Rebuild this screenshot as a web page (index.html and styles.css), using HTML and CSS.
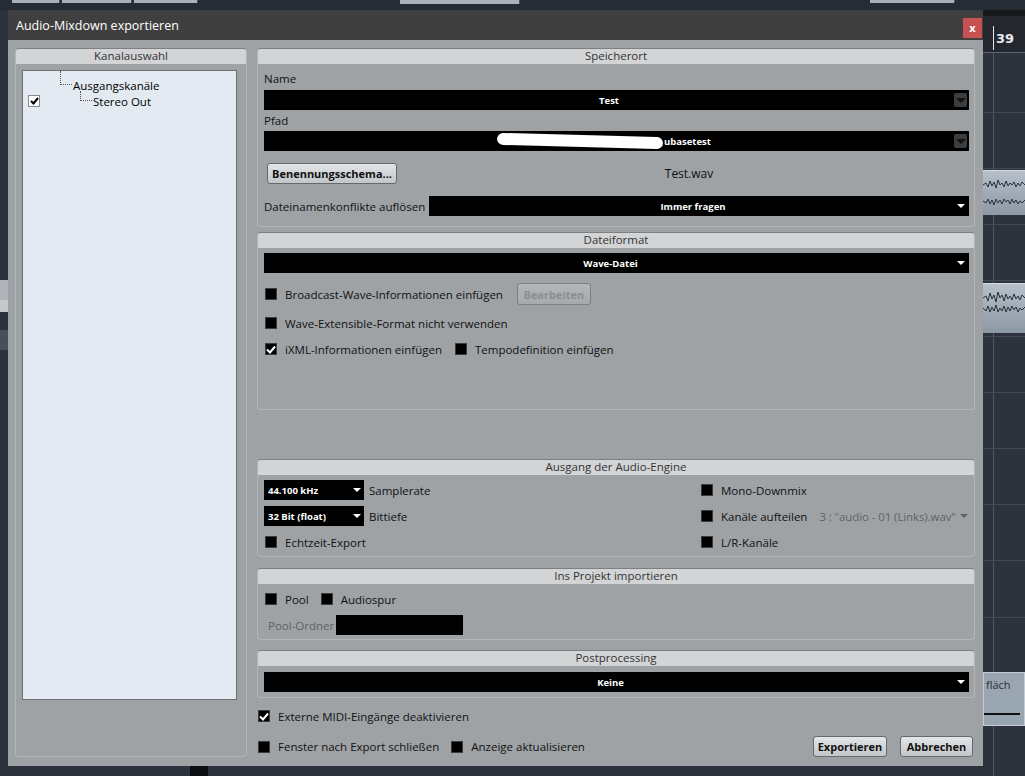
FILE: index.html
```html
<!DOCTYPE html>
<html lang="de">
<head>
<meta charset="utf-8">
<title>Audio-Mixdown exportieren</title>
<link rel="stylesheet" href="styles.css">
</head>
<body>
<div class="desk">
  <div class="topbar">
    <span class="tb tb1"></span><span class="tb tb2"></span><span class="tb tb3"></span><span class="tb tb4"></span><span class="tb tb5"></span>
  </div>
  <div class="ruler"><span class="rmark"></span><span class="rnum">39</span></div>
  <div class="vgrid"></div>
  <div class="hline" style="top:112px"></div>
  <div class="hline" style="top:168px"></div>
  <div class="hline" style="top:224px"></div>
  <div class="hline" style="top:280px"></div>
  <div class="hline" style="top:336px"></div>
  <div class="hline" style="top:392px"></div>
  <div class="hline" style="top:448px"></div>
  <div class="hline" style="top:504px"></div>
  <div class="hline" style="top:560px"></div>
  <div class="hline" style="top:617px"></div>
  <div class="clip clip1"><svg width="42" height="44" viewBox="0 0 42 44"><path d="M0 14 L3 12 L5 16 L7 10 L9 15 L11 11 L13 17 L15 9 L17 14 L19 12 L21 16 L23 10 L25 15 L27 12 L29 14 L31 11 L33 16 L35 12 L37 15 L39 11 L42 14" fill="none" stroke="#2a2f36" stroke-width="1"/><path d="M0 30 L3 32 L5 28 L7 33 L9 29 L11 34 L13 28 L15 32 L17 29 L19 33 L21 28 L23 31 L25 29 L27 33 L29 28 L31 32 L33 29 L35 33 L37 30 L39 32 L42 29" fill="none" stroke="#2a2f36" stroke-width="1"/></svg></div>
  <div class="clip clip2"><svg width="42" height="50" viewBox="0 0 42 50"><path d="M0 14 L3 12 L5 17 L7 9 L9 15 L11 11 L13 18 L15 8 L17 14 L19 11 L21 17 L23 10 L25 15 L27 12 L29 16 L31 10 L33 15 L35 12 L37 16 L39 11 L42 14" fill="none" stroke="#2a2f36" stroke-width="1"/><path d="M0 24 L3 27 L5 22 L7 28 L9 23 L11 27 L13 21 L15 28 L17 24 L19 27 L21 22 L23 28 L25 23 L27 27 L29 22 L31 26 L33 23 L35 28 L37 24 L39 26 L42 23" fill="none" stroke="#2a2f36" stroke-width="1"/></svg></div>
  <div class="clip clip3"><span class="cliptext">fläch</span><span class="clipline"></span></div>
  <div class="leftcell lc1"></div>
  <div class="leftcell lc2"></div>
  <div class="leftcell lc3"></div>
  <div class="bottombar"></div>
</div>

<div class="dialog">
  <div class="titlebar">Audio-Mixdown exportieren<span class="close">x</span></div>
  <div class="dbody">
    <div class="leftpanel">
      <div class="phead">Kanalauswahl</div>
      <div class="tree">
        <div class="trow t1"><span class="dots d1"></span>Ausgangskanäle</div>
        <div class="trow t2"><span class="tcheck"><svg width="9" height="8" viewBox="0 0 9 8"><path d="M1 4 L3.5 6.5 L8 1" fill="none" stroke="#000" stroke-width="2"/></svg></span><span class="dots d2"></span>Stereo Out</div>
      </div>
    </div>

    <div class="rightcol">
      <div class="section s-speicher">
        <div class="shead">Speicherort</div>
        <div class="sbody">
          <div class="label l-name">Name</div>
          <div class="field f-name"><span class="ftext">Test</span><span class="abtn"><span class="tri dark"></span></span></div>
          <div class="label l-pfad">Pfad</div>
          <div class="field f-pfad"><span class="ftext"><span class="blob"></span>ubasetest</span><span class="abtn"><span class="tri dark"></span></span></div>
          <div class="btnrow">
            <span class="btn b-schema">Benennungsschema...</span>
            <span class="fname">Test.wav</span>
          </div>
          <div class="konflikt">
            <span class="klabel">Dateinamenkonflikte auflösen</span>
            <div class="drop d-konf"><span class="ftext">Immer fragen</span><span class="tri"></span></div>
          </div>
        </div>
      </div>

      <div class="section s-format">
        <div class="shead">Dateiformat</div>
        <div class="sbody">
          <div class="drop d-wave"><span class="ftext">Wave-Datei</span><span class="tri"></span></div>
          <div class="crow r-bwf"><span class="cb"></span><span>Broadcast-Wave-Informationen einfügen</span><span class="btn disabled b-edit">Bearbeiten</span></div>
          <div class="crow r-ext"><span class="cb"></span><span>Wave-Extensible-Format nicht verwenden</span></div>
          <div class="crow r-ixml"><span class="cb on"><svg width="10" height="9" viewBox="0 0 10 9"><path d="M1 4.5 L4 7.5 L9 1.5" fill="none" stroke="#fff" stroke-width="2"/></svg></span><span>iXML-Informationen einfügen</span><span class="cb cb-gap"></span><span>Tempodefinition einfügen</span></div>
        </div>
      </div>

      <div class="section s-engine">
        <div class="shead">Ausgang der Audio-Engine</div>
        <div class="sbody egrid">
          <div class="crow"><span class="sel"><span class="seltext">44.100 kHz</span><span class="tri"></span></span><span>Samplerate</span></div>
          <div class="crow"><span class="cb"></span><span>Mono-Downmix</span></div>
          <div class="crow"><span class="sel"><span class="seltext">32 Bit (float)</span><span class="tri"></span></span><span>Bittiefe</span></div>
          <div class="crow"><span class="cb"></span><span>Kanäle aufteilen</span><span class="grey split">3 : "audio - 01 (Links).wav"</span><span class="tri grey-tri"></span></div>
          <div class="crow"><span class="cb"></span><span>Echtzeit-Export</span></div>
          <div class="crow"><span class="cb"></span><span>L/R-Kanäle</span></div>
        </div>
      </div>

      <div class="section s-import">
        <div class="shead">Ins Projekt importieren</div>
        <div class="sbody">
          <div class="crow r-pool"><span class="cb"></span><span>Pool</span><span class="cb cb-gap2"></span><span>Audiospur</span></div>
          <div class="crow r-order"><span class="grey">Pool-Ordner</span><span class="pfield"></span></div>
        </div>
      </div>

      <div class="section s-post">
        <div class="shead">Postprocessing</div>
        <div class="sbody">
          <div class="drop d-post"><span class="ftext">Keine</span><span class="tri"></span></div>
        </div>
      </div>

      <div class="crow r-midi"><span class="cb on"><svg width="10" height="9" viewBox="0 0 10 9"><path d="M1 4.5 L4 7.5 L9 1.5" fill="none" stroke="#fff" stroke-width="2"/></svg></span><span>Externe MIDI-Eingänge deaktivieren</span></div>
      <div class="crow r-foot">
        <span class="cb"></span><span>Fenster nach Export schließen</span>
        <span class="cb cb-gap3"></span><span>Anzeige aktualisieren</span>
        <span class="spacer"></span>
        <span class="btn b-exp">Exportieren</span>
        <span class="btn b-abb">Abbrechen</span>
      </div>
    </div>
  </div>
</div>
</body>
</html>
```

FILE: styles.css
```css
* { box-sizing: border-box; }
html, body { margin: 0; padding: 0; }
body {
  width: 1025px;
  height: 776px;
  overflow: hidden;
  position: relative;
  background: #2c333c;
  font-family: "Open Sans", "Noto Sans", "DejaVu Sans", sans-serif;
  font-size: 11.5px;
  color: #111;
}

/* ---------- background DAW ---------- */
.desk { position: absolute; inset: 0; }
.topbar { position: absolute; left: 0; top: 0; width: 1025px; height: 10px; background: #262c34; }
.tb { position: absolute; top: 0; height: 3px; background: #a9b2bc; border-right: 1px solid #4b535d; }
.tb1 { left: 12px; width: 48px; }
.tb2 { left: 62px; width: 70px; }
.tb3 { left: 134px; width: 64px; }
.tb4 { left: 400px; width: 120px; height: 4px; }
.tb5 { left: 870px; width: 85px; }
.ruler { position: absolute; left: 983px; top: 10px; width: 42px; height: 43px; background: #24282e; border-top: 6px solid #17191c; border-bottom: 1px solid #5a636e; }
.rmark { position: absolute; left: 10px; top: 10px; width: 1px; height: 24px; background: #e6e6e6; }
.rnum { position: absolute; left: 13px; top: 15px; color: #e8ecf2; font-weight: bold; font-size: 13px; font-family: "DejaVu Sans", sans-serif; }
.vgrid { position: absolute; left: 993px; top: 53px; width: 1px; height: 723px; background: #4f5863; }
.hline { position: absolute; left: 983px; width: 42px; height: 1px; background: #414953; }
.clip { position: absolute; left: 983px; width: 42px; background: linear-gradient(#b6bfca, #8d98a5); border-top: 1px solid #d5dbe2; }
.clip1 { top: 170px; height: 45px; }
.clip2 { top: 283px; height: 50px; }
.clip3 { top: 672px; height: 54px; background: #9aa5b2; border: 1px solid #c4ccd6; }
.cliptext { position: absolute; left: 2px; top: 4px; font-size: 11px; color: #2a2f36; }
.clipline { position: absolute; left: 0; right: 4px; top: 40px; height: 2px; background: #111; }
.leftcell { position: absolute; left: 0; width: 8px; }
.lc1 { top: 280px; height: 20px; background: #aeb3b9; }
.lc2 { top: 300px; height: 12px; background: #c5c9cd; }
.lc3 { top: 330px; height: 20px; background: #484f58; }
.bottombar { position: absolute; left: 190px; top: 766px; width: 18px; height: 10px; background: #0c0d0f; }

/* ---------- dialog ---------- */
.dialog {
  position: absolute;
  left: 8px;
  top: 10px;
  width: 975px;
  height: 756px;
  background: #9ea2a5;
  display: flex;
  flex-direction: column;
}
.titlebar {
  height: 30px;
  flex: none;
  background: #3f3f3f;
  color: #fff;
  font-size: 12.5px;
  display: flex;
  align-items: center;
  padding-left: 8px;
  position: relative;
}
.close {
  position: absolute;
  right: 1px;
  top: 8px;
  width: 19px;
  height: 20px;
  background: #c75050;
  color: #fff;
  font-size: 11px;
  font-weight: bold;
  display: flex;
  align-items: center;
  justify-content: center;
  line-height: 1;
  padding-bottom: 2px;
}
.dbody {
  flex: 1;
  display: flex;
  gap: 10px;
  padding: 8px 8px 9px 7px;
}

/* left panel */
.leftpanel {
  width: 232px;
  flex: none;
  border: 1px solid #b3b6b9;
  border-top-color: #7d8083;
  border-radius: 4px;
  display: flex;
  flex-direction: column;
}
.phead, .shead {
  height: 15px;
  flex: none;
  background: #d2d4d6;
  color: #333;
  text-align: center;
  line-height: 14px;
  font-size: 11.5px;
  border-radius: 3px 3px 0 0;
}
.tree {
  margin: 6px 9px 0 6px;
  height: 630px;
  background: #e4eaf1;
  border: 1px solid #6e6f71;
  position: relative;
}
.trow { position: absolute; display: flex; align-items: center; height: 14px; font-size: 11.5px; color: #000; line-height: 13px; }
.t1 { left: 50px; top: 7px; }
.t2 { left: 5px; top: 23px; width: 200px; }
.dots { display: inline-block; border-left: 1px dotted #555; border-bottom: 1px dotted #555; }
.t1 .d1 { position: absolute; left: -13px; top: -7px; width: 12px; height: 14px; margin: 0; }
.tcheck {
  width: 12px; height: 12px;
  background: #fff;
  border: 1px solid #8a8a8a;
  display: flex; align-items: center; justify-content: center;
  margin-right: 40px;
}
.d2 { width: 12px; height: 10px; margin-top: -10px; margin-right: 1px; }

/* right column */
.rightcol {
  flex: 1;
  display: flex;
  flex-direction: column;
  line-height: 15px;
}
.section {
  border: 1px solid #b3b6b9;
  border-top-color: #7d8083;
  border-radius: 4px;
  display: flex;
  flex-direction: column;
  flex: none;
}
.sbody { padding: 0 5px 0 6px; display: flex; flex-direction: column; }
.s-speicher { height: 179px; }
.s-format { height: 178px; margin-top: 5px; }
.s-engine { height: 98px; margin-top: 49px; }
.s-import { height: 72px; margin-top: 11px; }
.s-post { height: 48px; margin-top: 10px; }

.label { height: 14px; line-height: 13px; }
.l-name { margin-top: 8px; }
.l-pfad { margin-top: 4px; }
.field {
  height: 20px;
  background: #000;
  display: flex;
  align-items: center;
  padding-right: 2px;
}
.f-name { margin-top: 4px; }
.f-pfad { margin-top: 3px; }
.ftext {
  flex: 1;
  text-align: center;
  color: #fff;
  font-weight: bold;
  font-size: 9.5px;
  display: flex;
  justify-content: center;
  align-items: center;
}
.blob {
  display: inline-block;
  width: 166px;
  height: 12px;
  background: #fff;
  border-radius: 7px;
  transform: rotate(1.5deg);
  margin-right: 1px;
  margin-left: -10px;
}
.abtn {
  width: 13px;
  height: 14px;
  background: #3d3d3d;
  border-radius: 2px;
  display: flex;
  align-items: center;
  justify-content: center;
}
.tri {
  width: 0; height: 0;
  flex: none;
  border-left: 4px solid transparent;
  border-right: 4px solid transparent;
  border-top: 4px solid #fff;
}
.tri.dark { border-top-color: #151515; border-left-width: 5px; border-right-width: 5px; border-top-width: 5px; }

.btnrow { margin-top: 12px; height: 21px; display: flex; align-items: center; }
.btn {
  height: 21px;
  flex: none;
  display: inline-flex;
  align-items: center;
  justify-content: center;
  font-weight: bold;
  font-size: 11px;
  color: #111;
  background: linear-gradient(#e3e5e7, #c3c6c9);
  border: 1px solid #66696c;
  border-radius: 3px;
}
.b-schema { width: 130px; margin-left: 3px; }
.fname { flex: 1; text-align: center; padding-left: 12px; font-size: 12px; }
.konflikt { margin-top: 12px; height: 20px; display: flex; align-items: center; }
.klabel { width: 165px; flex: none; }
.drop {
  flex: 1;
  height: 20px;
  background: #000;
  display: flex;
  align-items: center;
  padding-right: 4px;
}
.d-wave { margin-top: 5px; flex: none; }
.d-post { margin-top: 6px; flex: none; }

.crow { display: flex; align-items: center; height: 20px; white-space: nowrap; }
.crow > span { flex: none; }
.cb {
  width: 12px; height: 12px;
  flex: none;
  background: #000;
  border: 1px solid #3c3c3c;
  margin: 0 8px 0 1px;
  display: inline-flex;
  align-items: center;
  justify-content: center;
}
.cb-gap { margin-left: 13px; }
.cb-gap2 { margin-left: 12px; }
.cb-gap3 { margin-left: 12px; }
.r-bwf { margin-top: 10px; height: 22px; }
.b-edit { margin-left: 14px; width: 74px; height: 22px; }
.btn.disabled { color: #8a8e91; font-weight: bold; background: linear-gradient(#b4b7ba, #a7aaad); border-color: #7d8083; }
.r-ext { margin-top: 8px; }
.r-ixml { margin-top: 6px; }

.egrid {
  display: grid;
  grid-template-columns: 436px 1fr;
  row-gap: 6px;
  padding-top: 5px;
}
.sel {
  width: 100px;
  height: 20px;
  background: #000;
  display: inline-flex;
  align-items: center;
  padding: 0 3px 0 4px;
  margin-right: 5px;
}
.seltext { flex: 1; color: #fff; font-weight: bold; font-size: 9.5px; }
.grey { color: #5f6366; }
.split { margin-left: 12px; letter-spacing: -0.1px; }
.grey-tri { border-top-color: #5f6366; margin-left: 4px; }

.r-pool { margin-top: 5px; }
.r-order { margin-top: 6px; padding-left: 4px; }
.pfield { width: 127px; height: 20px; background: #000; margin-left: 2px; }

.r-midi { margin-top: 8px; }
.r-foot { margin-top: 10px; height: 21px; }
.r-foot > .spacer { flex: 1; }
.b-exp { width: 74px; }
.b-abb { width: 73px; margin-left: 13px; margin-right: 2px; }
```
